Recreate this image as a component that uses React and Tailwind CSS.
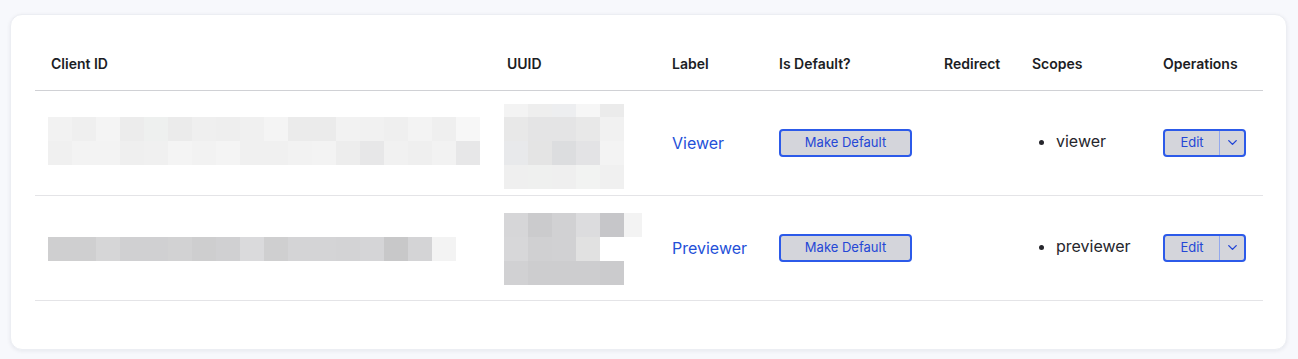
import React from 'react';
import { ChevronDown } from 'lucide-react';

const FONT = { fontFamily: 'Inter, "Noto Sans", sans-serif' };

// pixelated (redacted) values, drawn as rect grids
const blobs = {
  client1: {
    w: 432,
    rows: [
      { y: 26, h: 24, cells: ['#f2f2f2', '#efefef', '#f4f4f4', '#ececec', '#eef0ef', '#ebebeb', '#efefef', '#eeeeee', '#f0f0f0', '#f4f4f4', '#ebebeb', '#ebebeb', '#f2f2f2', '#f1f1f1', '#efefef', '#f3f3f3', '#efefef', '#f7f7f7'] },
      { y: 50, h: 24, cells: ['#f0f0f0', '#f3f3f3', '#f3f3f3', '#efefef', '#f0f0f0', '#f4f4f4', '#f2f2f2', '#f4f4f4', '#f0f0f0', '#f0f0f0', '#f2f2f2', '#f3f3f3', '#ededed', '#e7e7e8', '#f1f1f1', '#efefef', '#f2f2f2', '#e7e7e8'] },
    ],
  },
  uuid1: {
    w: 120,
    rows: [
      { y: 13, h: 13, cells: ['#f3f3f3', '#eeeeee', '#edeef0', '#f6f6f6', '#ebebeb'] },
      { y: 26, h: 24, cells: ['#e8e8e8', '#e4e4e5', '#e4e4e5', '#e8e8e8', '#f1f1f1'] },
      { y: 50, h: 24, cells: ['#e8e9eb', '#e4e4e4', '#dcdddf', '#e3e3e5', '#f3f3f3'] },
      { y: 74, h: 24, cells: ['#efefef', '#eff0ef', '#efefef', '#f2f3f2', '#f0f0f0'] },
    ],
  },
  client2: {
    w: 408,
    rows: [
      { y: 41, h: 24, cells: ['#cfcfd0', '#cfcfd0', '#d6d6d7', '#d0d0d2', '#d0d0d2', '#d2d2d3', '#cececf', '#d0d0d2', '#dadadc', '#cfcfd0', '#d4d4d6', '#d4d4d6', '#d3d3d5', '#d5d5d7', '#c8c8c9', '#d4d4d6', '#f3f3f3'] },
    ],
  },
  uuid2: {
    w: 138,
    rows: [
      { y: 17, h: 24, cells: ['#d6d6d8', '#cbcbcd', '#d1d1d3', '#dcdcde', '#c6c6c9', '#f3f3f3'] },
      { y: 41, h: 24, cells: ['#d7d7d9', '#d0d0d2', '#d1d1d3', '#e1e1e1'] },
      { y: 65, h: 24, cells: ['#d1d1d3', '#cdcdcf', '#cdcdcf', '#cdcdcf', '#cbcbcd'] },
    ],
  },
};

const Blob = ({ data }) => (
  <svg width={data.w} height="104" className="block">
    {data.rows.map((row, r) =>
      row.cells.map((c, i) => (
        <rect key={`${r}-${i}`} x={i * 24} y={row.y} width={Math.min(24, data.w - i * 24)} height={row.h} fill={c} />
      ))
    )}
  </svg>
);

const clients = [
  { id: 'client1', uuid: 'uuid1', label: 'Viewer', scope: 'viewer' },
  { id: 'client2', uuid: 'uuid2', label: 'Previewer', scope: 'previewer' },
];

const headers = ['Client ID', 'UUID', 'Label', 'Is Default?', 'Redirect', 'Scopes', 'Operations'];

const App = () => {
  return (
    <div className="min-h-screen bg-[#f7f8fc] pt-[14px] pl-[10px] pr-[11px]" style={FONT}>
      <div className="bg-white rounded-xl border border-[#eceef3] shadow-[0_1px_4px_rgba(20,30,60,0.07)] pt-[23px] pb-[48px] pl-[24px] pr-[23px]">
        <table className="table-fixed border-collapse w-[1228px]">
          <colgroup>
            <col className="w-[456px]" />
            <col className="w-[165px]" />
            <col className="w-[107px]" />
            <col className="w-[165px]" />
            <col className="w-[88px]" />
            <col className="w-[131px]" />
            <col className="w-[116px]" />
          </colgroup>
          <thead>
            <tr className="h-[52px] border-b border-[#d0d1d5]">
              {headers.map((h) => (
                <th key={h} className="px-4 text-left align-middle text-sm font-semibold text-[#1c1d24]">
                  {h}
                </th>
              ))}
            </tr>
          </thead>
          <tbody>
            {clients.map((c) => (
              <tr key={c.id} className="h-[105px] border-b border-[#e4e4e7]">
                <td className="pl-[13px] p-0 align-top">
                  <Blob data={blobs[c.id]} />
                </td>
                <td className="pl-[13px] p-0 align-top">
                  <Blob data={blobs[c.uuid]} />
                </td>
                <td className="px-4 align-middle text-base text-[#2450d8]">{c.label}</td>
                <td className="px-4 align-middle">
                  <button className="w-[133px] h-[28px] rounded border-2 border-[#2c5ae9] bg-[#d4d5db] text-[13px] text-[#2447d6]">
                    Make Default
                  </button>
                </td>
                <td className="px-4 align-middle"></td>
                <td className="px-4 align-middle">
                  <ul className="list-disc pl-6 text-base text-[#26262c] -mt-[4px]">
                    <li>{c.scope}</li>
                  </ul>
                </td>
                <td className="px-4 align-middle">
                  <div className="flex w-[83px] h-[28px] rounded border-2 border-[#2c5ae9] bg-[#d4d5db] overflow-hidden">
                    <button className="w-[55px] text-[13px] text-[#2447d6] border-r border-[#93a8ee]">Edit</button>
                    <button className="flex-1 flex items-center justify-center text-[#2447d6]">
                      <ChevronDown size={15} strokeWidth={2.25} />
                    </button>
                  </div>
                </td>
              </tr>
            ))}
          </tbody>
        </table>
      </div>
    </div>
  );
};

export default App;
